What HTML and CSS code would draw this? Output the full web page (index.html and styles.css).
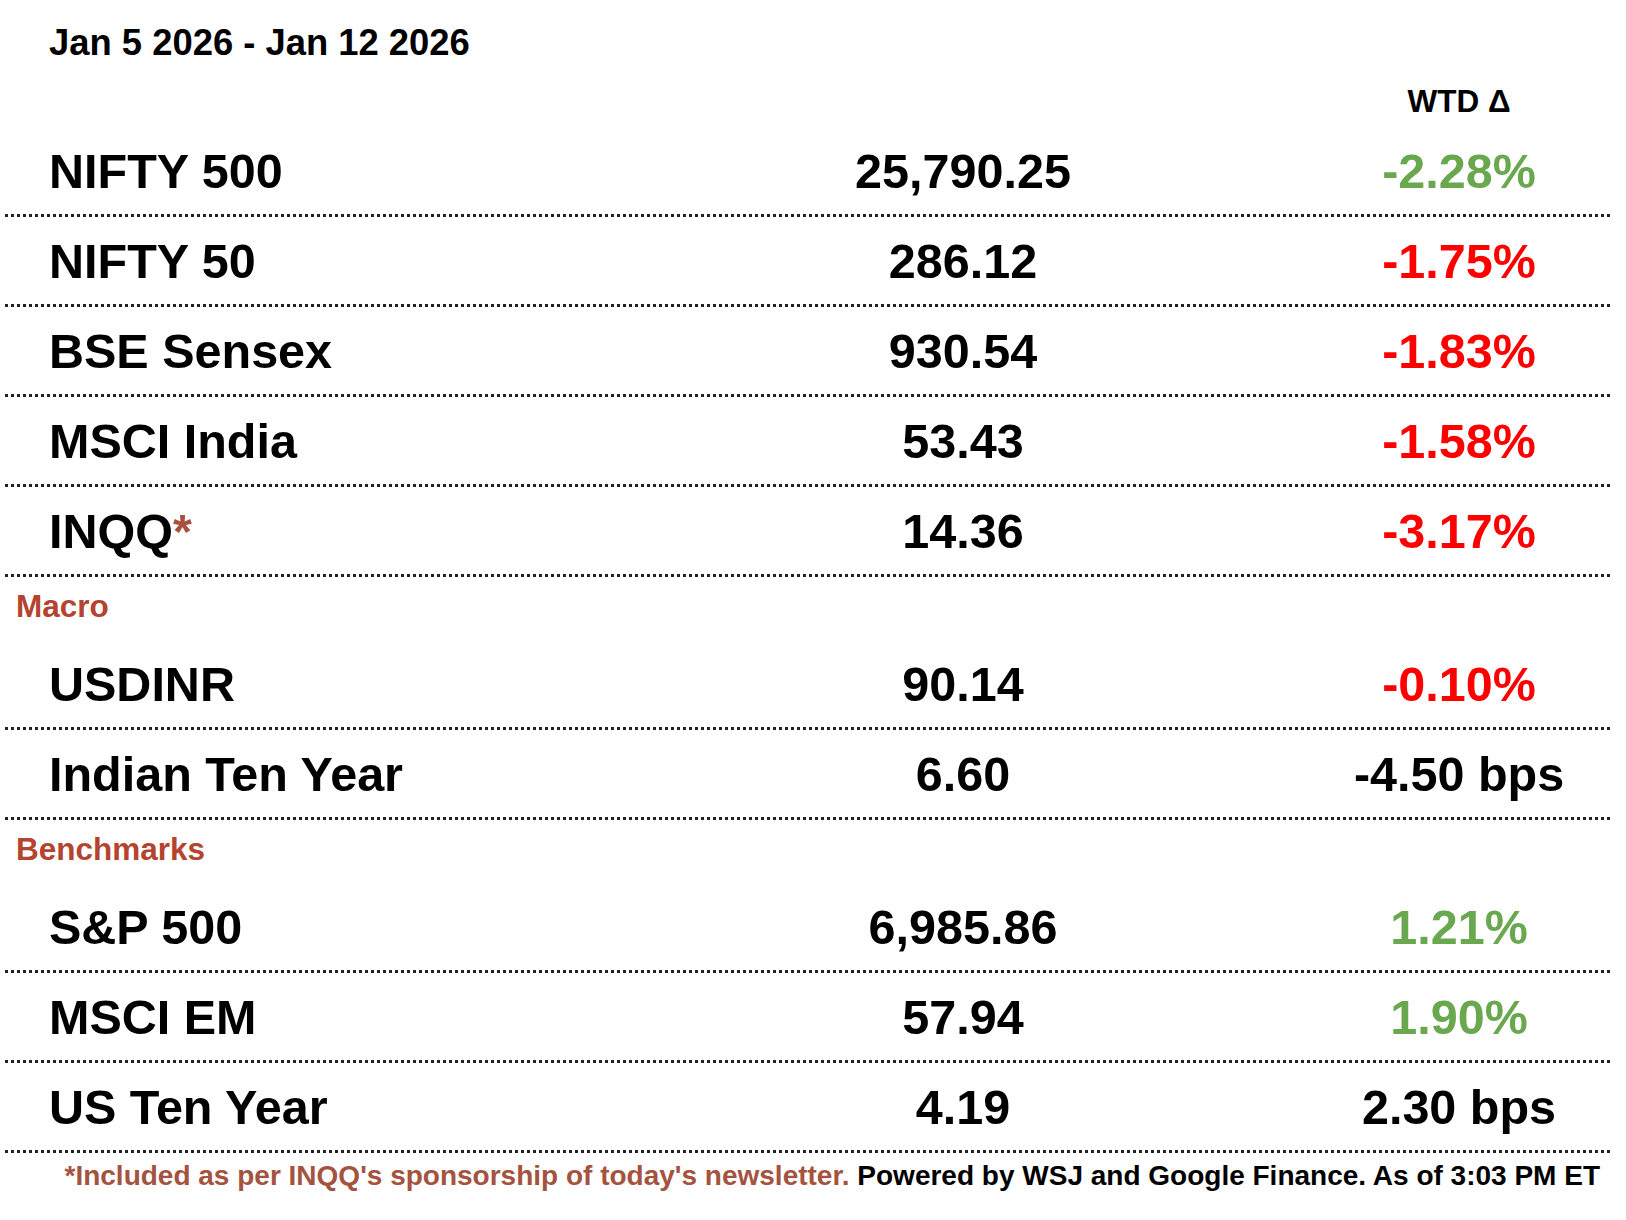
FILE: index.html
```html
<!DOCTYPE html>
<html lang="en">
<head>
<meta charset="utf-8">
<title>Weekly Market Summary</title>
<link rel="stylesheet" href="styles.css">
</head>
<body>
<div class="sheet">
  <div class="date">Jan 5 2026 - Jan 12 2026</div>
  <div class="head grid">
    <span></span><span></span><span class="chg-head">WTD Δ</span>
  </div>

  <div class="row grid"><span class="name">NIFTY 500</span><span class="val">25,790.25</span><span class="chg green">-2.28%</span></div>
  <div class="row grid"><span class="name">NIFTY 50</span><span class="val">286.12</span><span class="chg red">-1.75%</span></div>
  <div class="row grid"><span class="name">BSE Sensex</span><span class="val">930.54</span><span class="chg red">-1.83%</span></div>
  <div class="row grid"><span class="name">MSCI India</span><span class="val">53.43</span><span class="chg red">-1.58%</span></div>
  <div class="row grid"><span class="name">INQQ<span class="star">*</span></span><span class="val">14.36</span><span class="chg red">-3.17%</span></div>

  <div class="section">Macro</div>
  <div class="row grid"><span class="name">USDINR</span><span class="val">90.14</span><span class="chg red">-0.10%</span></div>
  <div class="row grid"><span class="name">Indian Ten Year</span><span class="val">6.60</span><span class="chg">-4.50 bps</span></div>

  <div class="section">Benchmarks</div>
  <div class="row grid"><span class="name">S&amp;P 500</span><span class="val">6,985.86</span><span class="chg green">1.21%</span></div>
  <div class="row grid"><span class="name">MSCI EM</span><span class="val">57.94</span><span class="chg green">1.90%</span></div>
  <div class="row grid"><span class="name">US Ten Year</span><span class="val">4.19</span><span class="chg">2.30 bps</span></div>

  <div class="footer"><span class="note">*Included as per INQQ's sponsorship of today's newsletter.</span> Powered by WSJ and Google Finance. As of 3:03 PM ET</div>
</div>
</body>
</html>
```

FILE: styles.css
```css
html, body {
  margin: 0;
  padding: 0;
  background: #ffffff;
}

body {
  font-family: "Liberation Sans", Arial, Helvetica, sans-serif;
  font-weight: 700;
  color: #000000;
}

.sheet {
  width: 1605px;
  padding: 22px 0 0 5px;
}

.date {
  font-size: 36.4px;
  line-height: 41px;
  padding-left: 44px;
}

.grid {
  display: grid;
  grid-template-columns: 613px 690px 302px;
  align-items: baseline;
}

.head {
  margin-top: 20px;
  margin-bottom: 8px;
  font-size: 31.5px;
  line-height: 36px;
}

.chg-head {
  text-align: center;
}

.row {
  font-size: 48.5px;
  line-height: 54px;
  padding: 17px 0 16px 0;
  border-bottom: 3px dotted #222222;
}

.name {
  padding-left: 44px;
  white-space: nowrap;
}

.val {
  text-align: center;
}

.chg {
  text-align: center;
  white-space: nowrap;
}

.green {
  color: #6aa84f;
}

.red {
  color: #ff0000;
}

.star {
  color: #a6523e;
}

.section {
  font-size: 31.5px;
  line-height: 36px;
  color: #b4432f;
  padding: 11px 0 16px 11px;
}

.footer {
  font-size: 28px;
  line-height: 32px;
  padding-top: 7px;
  padding-right: 10px;
  text-align: right;
  white-space: nowrap;
}

.note {
  color: #a4533f;
}
```
